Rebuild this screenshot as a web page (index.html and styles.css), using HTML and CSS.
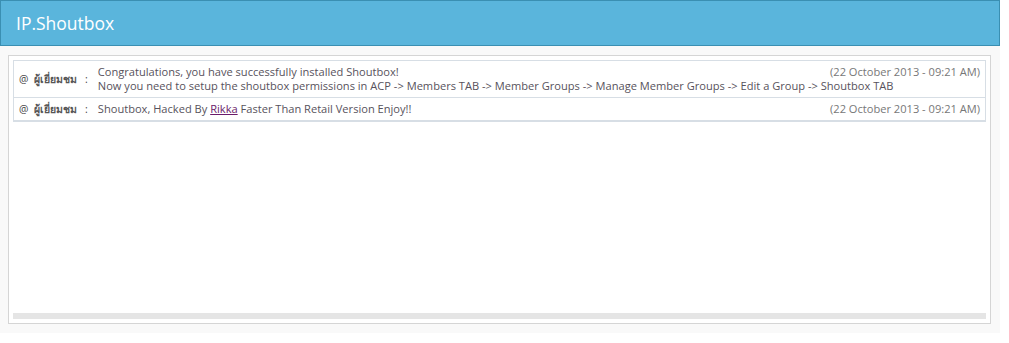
FILE: index.html
```html
<!DOCTYPE html>
<html lang="en">
<head>
	<meta charset="UTF-8">
	<title>IP.Shoutbox</title>
	<link rel="stylesheet" href="styles.css">
</head>
<body>
	<div class="shoutbox">
		<h3 class="maintitle">IP.Shoutbox</h3>
		<div class="general-box">
			<div class="shouts">
				<table class="shout-table">
					<tr class="row1">
						<td class="shout-name">@&nbsp; <span class="member">ผู้เยี่ยมชม</span>&nbsp;&nbsp; :</td>
						<td class="shout-text"><span class="shout-date">(22 October 2013 - 09:21 AM)</span>Congratulations, you have successfully installed Shoutbox!<br>Now you need to setup the shoutbox permissions in ACP -&gt; Members TAB -&gt; Member Groups -&gt; Manage Member Groups -&gt; Edit a Group -&gt; Shoutbox TAB</td>
					</tr>
					<tr class="row2">
						<td class="shout-name">@&nbsp; <span class="member">ผู้เยี่ยมชม</span>&nbsp;&nbsp; :</td>
						<td class="shout-text"><span class="shout-date">(22 October 2013 - 09:21 AM)</span>Shoutbox, Hacked By <a href="#">Rikka</a> Faster Than Retail Version Enjoy!!</td>
					</tr>
				</table>
				<div class="shout-scroll"></div>
			</div>
		</div>
	</div>
</body>
</html>
```

FILE: styles.css
```css
body {
	margin: 0;
	padding: 0;
	background-color: #fff;
	font-family: "Open Sans", "Noto Sans", sans-serif;
	font-size: 11.1px;
	color: #555;
}

.shoutbox {
	width: 1000px;
}

.maintitle {
	margin: 0;
	height: 44px;
	padding: 0 15px;
	background-color: #5ab5dc;
	border: 1px solid #3a8fb2;
	color: #fff;
	font-size: 17.5px;
	font-weight: normal;
	line-height: 44px;
}

.general-box {
	background-color: #f9f9f9;
	padding: 9px 9px 9px 8px;
}

.shouts {
	height: 263px;
	background-color: #fff;
	border: 1px solid #d5d5d5;
	padding: 4px 4px 0 4px;
	display: flex;
	flex-direction: column;
}

.shout-table {
	width: 100%;
	border-collapse: collapse;
	border: 1px solid #d7dee5;
	border-bottom: 2px solid #d7dee5;
}

.shout-table td {
	padding: 4px 5px 4px 5px;
	line-height: 14px;
	border-bottom: 1px solid #d7dee5;
}

.shout-name {
	width: 67px;
	white-space: nowrap;
	vertical-align: middle;
	font-size: 10.5px;
	color: #444;
}

.member {
	font-weight: 600;
	color: #555;
}

.shout-text {
	vertical-align: top;
	color: #57525c;
}

.shout-text a {
	color: #6a1b6a;
}

.shout-date {
	float: right;
	white-space: nowrap;
	color: #777;
}

.shout-scroll {
	margin-top: auto;
	height: 6px;
	margin-bottom: 4px;
	background-color: #e5e5e5;
}
```
